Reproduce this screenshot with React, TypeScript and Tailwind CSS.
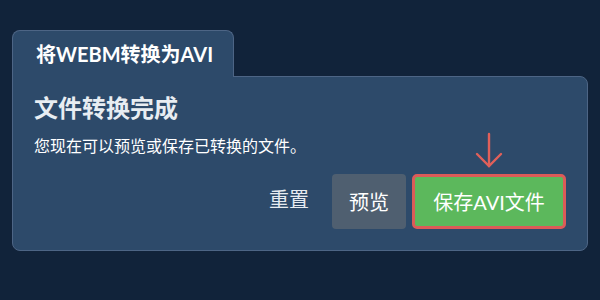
import React from "react";

const App = () => {
  return (
    <div
      className="w-[600px] h-[300px] bg-[#11233a] pt-[30px] pl-[12px]"
      style={{ fontFamily: 'Lato, "Noto Sans CJK SC", sans-serif' }}
    >
      {/* Вкладка */}
      <div className="relative z-10 -mb-px w-[222px] h-[47px] rounded-t-lg border border-b-0 border-[#4d6585] bg-[#2d4a6a] pl-[23px] pt-[11px]">
        <span className="text-[20px] font-bold text-white leading-[24px]">将WEBM转换为AVI</span>
      </div>

      {/* Панель */}
      <div className="w-[576px] h-[175px] rounded-b-lg rounded-tr-lg border border-[#4d6585] bg-[#2d4a6a] px-[21px] pt-[15px]">
        <h2 className="text-[24px] font-bold text-[#e8edf2] leading-[32px]">文件转换完成</h2>
        <p className="mt-[11px] text-[16px] text-white leading-[22px]">您现在可以预览或保存已转换的文件。</p>

        <div className="mt-[17px] flex items-center justify-end gap-[6px]">
          <button className="-mt-[6px] pl-[10px] pr-[17px] text-[20px] text-[#e6ebf0]">重置</button>
          <button className="h-[55px] w-[74px] rounded-[4px] bg-[#4f5f70] text-[20px] text-white">预览</button>
          <div className="relative">
            <svg
              className="absolute left-1/2 -translate-x-1/2 -top-[42px]"
              width="30"
              height="38"
              viewBox="0 0 30 38"
              fill="none"
              stroke="#e0605a"
              strokeWidth="2.4"
              strokeLinecap="round"
            >
              <path d="M15 2 V34" />
              <path d="M3 22 L15 34 L27 22" />
            </svg>
            <button className="h-[55px] w-[154px] rounded-[5px] border-[3px] border-[#dc5b58] bg-[#5cb85c] text-[20px] text-white">
              保存AVI文件
            </button>
          </div>
        </div>
      </div>
    </div>
  );
};

export default App;
